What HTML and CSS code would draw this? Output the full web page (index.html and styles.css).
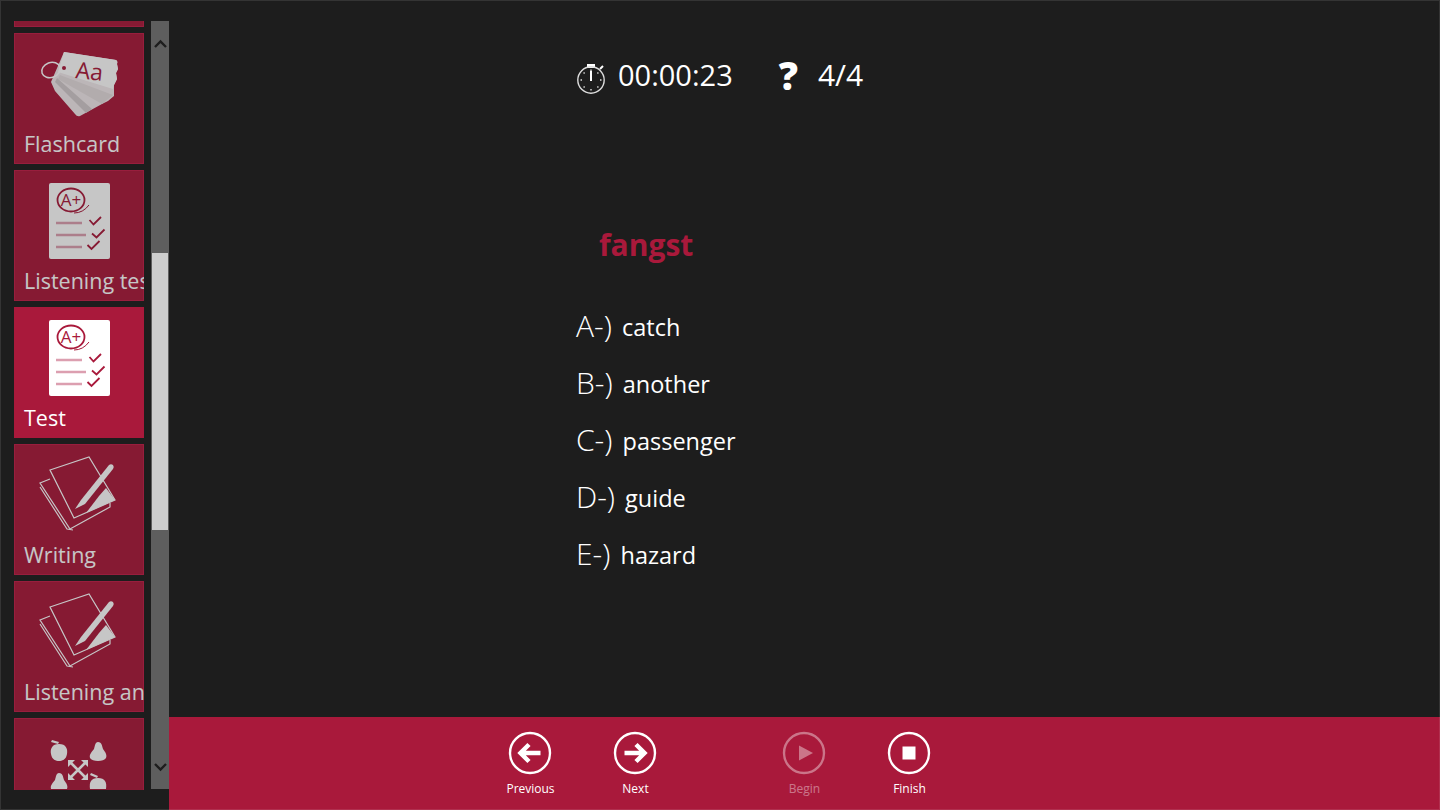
FILE: index.html
```html
<!DOCTYPE html>
<html lang="en">
<head>
<meta charset="UTF-8" />
<title>Test</title>
<link rel="stylesheet" href="styles.css">
</head>
<body>

<svg class="defs" width="0" height="0" aria-hidden="true">
  <defs>
    <symbol id="icon-cards" viewBox="0 0 131 100">
      <path class="shade-light" d="M50 19 L102 27 Q104 28 103 31 L104 36 L102 40 L103 46 L100 52 L100 63 L94 68 L88 71 L66 83 Q63 84 61 81 L41 58 L37 49 Z"/>
      <path class="shade" d="M46 42 L99 62 L88 71 L44 46 Z"/>
      <path class="shade-dark" d="M43 45 L78 76 L72 80 L41 49 Z"/>
      <path class="ink" d="M50 19 L102 27 Q104 28 103 31 L104 36 L102 40 L103 46 L100 52 L99 56 L44 39 Z"/>
      <ellipse class="ring" cx="37" cy="37" rx="9.5" ry="7.5" transform="rotate(-20 37 37)"/>
      <circle class="mark-fill" cx="50" cy="35" r="2"/>
      <text class="card-text" x="61" y="45" transform="rotate(6 61 45)">Aa</text>
    </symbol>
    <symbol id="icon-test" viewBox="0 0 131 100">
      <rect class="ink" x="35" y="13" width="61" height="76" rx="2"/>
      <ellipse class="mark-line" cx="57" cy="30" rx="13.5" ry="11.5"/>
      <path class="mark-thin" d="M60 43 Q69 43 75 35"/>
      <text class="grade-text" x="57" y="36">A+</text>
      <path class="rule" d="M42 53 H68 M42 65 H72 M42 77 H68"/>
      <path class="mark-line" d="M75.5 50 L79.5 54.5 L87 47 M78 63.5 L82.5 67.5 L90.5 59.5 M73.5 75 L77.5 79 L85.5 71"/>
    </symbol>
    <symbol id="icon-writing" viewBox="0 0 131 100">
      <path class="ink-line" d="M36 26 L75 13 L101 56 L60 74 Z"/>
      <path class="ink-line" d="M36 35 L26 39 L56 85 L96 63 L96 59"/>
      <path class="ink-line" d="M26 43 L53 85 L59 86"/>
      <path class="ink" d="M92 44 L101 56 L72 69 L85 52 Z"/>
      <path class="ink" d="M61 65 L67 56 L95 21 Q97 19.5 99 21 Q100.5 23 99 25 L71 60 Z"/>
    </symbol>
    <symbol id="icon-match" viewBox="0 0 131 100">
      <path class="ink" d="M45 26 C52 26 54 31 53 36 C52 42 48 43 45 43 C42 43 38 42 37 36 C36 31 38 26 45 26 Z"/>
      <path class="ink" d="M44 26 L37 24 L38 22 L45 24 Z"/>
      <path class="ink" d="M84 24 C88 24 88 28 89 31 C92 35 93 37 92 40 C90 44 78 44 76 40 C75 36 78 34 80 31 C81 28 81 24 84 24 Z"/>
      <path class="ink" d="M45 55 C49 55 49 59 50 62 C53 66 54 68 53 71 L37 71 C36 67 39 65 41 62 C42 59 42 55 45 55 Z"/>
      <path class="ink" d="M84 60 C91 60 93 64 92 71 L76 71 C75 64 77 60 84 60 Z"/>
      <path class="ink" d="M83 60 L76 57 L77 55 L84 58 Z"/>
      <path class="arrows" d="M57 59 L71 45 M57 45 L71 59"/>
      <path class="ink" d="M74 42 L74 49 L67 42 Z M54 42 L61 42 L54 49 Z M74 62 L67 62 L74 55 Z M54 62 L54 55 L61 62 Z"/>
    </symbol>
  </defs>
</svg>

<div class="app">
  <!-- SIDEBAR -->
  <aside class="sidebar">
    <div class="tile-viewport">
      <ul class="tile-list">
        <li class="tile"></li>
        <li class="tile">
          <svg class="tile-icon"><use href="#icon-cards"/></svg>
          <span class="tile-label">Flashcard</span>
        </li>
        <li class="tile">
          <svg class="tile-icon"><use href="#icon-test"/></svg>
          <span class="tile-label">Listening test</span>
        </li>
        <li class="tile active">
          <svg class="tile-icon"><use href="#icon-test"/></svg>
          <span class="tile-label">Test</span>
        </li>
        <li class="tile">
          <svg class="tile-icon"><use href="#icon-writing"/></svg>
          <span class="tile-label">Writing</span>
        </li>
        <li class="tile">
          <svg class="tile-icon"><use href="#icon-writing"/></svg>
          <span class="tile-label">Listening and writing</span>
        </li>
        <li class="tile">
          <svg class="tile-icon"><use href="#icon-match"/></svg>
          <span class="tile-label">Matching</span>
        </li>
      </ul>
    </div>
    <div class="scrollbar">
      <svg class="scroll-arrow" width="17" height="44" viewBox="0 0 17 44"><path d="M3 26 L8.5 20.5 L14 26"/></svg>
      <div class="scroll-thumb"></div>
      <svg class="scroll-arrow scroll-down" width="17" height="44" viewBox="0 0 17 44"><path d="M3 19 L8.5 24.5 L14 19"/></svg>
    </div>
  </aside>

  <div class="content">
    <!-- QUESTION -->
    <main class="question">
      <div class="stats">
        <svg class="timer-icon" width="30" height="34" viewBox="0 0 30 34">
          <path d="M11 3 H19 V7 H11 Z" class="timer-solid"/>
          <circle cx="15" cy="19" r="13.2"/>
          <path d="M15 10 V20" class="timer-hand"/>
          <path d="M24 8 L27 5" class="timer-hand"/>
          <path d="M15 8.5 V10 M15 28 V29.5 M4.5 19 H6 M24 19 H25.5 M7.6 11.6 L8.6 12.6 M21.4 25.4 L22.4 26.4 M22.4 11.6 L21.4 12.6 M8.6 25.4 L7.6 26.4"/>
        </svg>
        <span class="timer-value">00:00:23</span>
        <span class="question-mark">?</span>
        <span class="count-value">4/4</span>
      </div>
      <h1 class="word">fangst</h1>
      <ol class="options">
        <li class="option"><span class="option-key">A-)</span> catch</li>
        <li class="option"><span class="option-key">B-)</span> another</li>
        <li class="option"><span class="option-key">C-)</span> passenger</li>
        <li class="option"><span class="option-key">D-)</span> guide</li>
        <li class="option"><span class="option-key">E-)</span> hazard</li>
      </ol>
    </main>

    <!-- APP BAR -->
    <footer class="appbar">
      <button class="bar-btn">
        <svg class="bar-icon" viewBox="0 0 44 44"><circle cx="22" cy="22" r="20"/><path class="glyph-line" d="M32.5 22 H13 M21 13.5 L12.5 22 L21 30.5"/></svg>
        Previous
      </button>
      <button class="bar-btn">
        <svg class="bar-icon" viewBox="0 0 44 44"><circle cx="22" cy="22" r="20"/><path class="glyph-line" d="M11.5 22 H31 M23 13.5 L31.5 22 L23 30.5"/></svg>
        Next
      </button>
      <button class="bar-btn disabled">
        <svg class="bar-icon" viewBox="0 0 44 44"><circle cx="22" cy="22" r="20"/><path class="glyph" d="M17 14.5 L31 22 L17 29.5 Z"/></svg>
        Begin
      </button>
      <button class="bar-btn">
        <svg class="bar-icon" viewBox="0 0 44 44"><circle cx="22" cy="22" r="20"/><path class="glyph" d="M15.5 15.5 H28.5 V28.5 H15.5 Z"/></svg>
        Finish
      </button>
    </footer>
  </div>
</div>

</body>
</html>
```

FILE: styles.css
```css
/* Reset */
*, *::before, *::after {
  box-sizing: border-box;
}
body, h1, ul, ol, li, button {
  margin: 0;
  padding: 0;
}
ul, ol {
  list-style: none;
}

:root {
  --crimson: #a9193b;
  --bg: #1d1d1d;
  --ui-font: "Open Sans", "Noto Sans", sans-serif;
}

body {
  width: 1440px;
  height: 810px;
  overflow: hidden;
  background: var(--bg);
  color: white;
  font-family: var(--ui-font);
}

.defs {
  position: absolute;
}

.app {
  position: relative;
  display: flex;
  height: 810px;
}
/* thin window edge */
.app::after {
  content: "";
  position: absolute;
  inset: 0;
  border: 1px solid rgba(255, 255, 255, 0.1);
  pointer-events: none;
}

/* Sidebar */
.sidebar {
  width: 169px;
  flex: none;
  display: flex;
  padding: 21px 0 20px 14px;
  gap: 7px;
}
.tile-viewport {
  width: 130px;
  overflow: hidden;
}
.tile-list {
  margin-top: -125px;
  display: flex;
  flex-direction: column;
  gap: 6px;
}
.tile {
  width: 130px;
  height: 131px;
  flex: none;
  background: var(--crimson);
  opacity: 0.75;
  box-shadow: inset 0 0 0 1px #c21f48;
  overflow: hidden;
  white-space: nowrap;
}
.tile.active {
  opacity: 1;
  box-shadow: none;
}
.tile-icon {
  display: block;
  width: 131px;
  height: 100px;
}
.tile-label {
  display: block;
  padding-left: 10px;
  font-size: 21.5px;
  line-height: 22px;
  color: white;
}

/* Tile icon parts */
.ink { fill: white; }
.shade-light { fill: #f2eaec; }
.shade { fill: #e4dcde; }
.shade-dark { fill: #d2cacc; }
.ring { fill: none; stroke: white; stroke-width: 1.5; }
.ink-line { fill: none; stroke: white; stroke-width: 1.2; }
.mark-fill { fill: var(--crimson); }
.mark-line { fill: none; stroke: var(--crimson); stroke-width: 1.8; }
.mark-thin { fill: none; stroke: var(--crimson); stroke-width: 1; }
.rule { fill: none; stroke: #dc9fb0; stroke-width: 2.5; }
.arrows { fill: none; stroke: white; stroke-width: 2.5; }
.card-text {
  fill: var(--crimson);
  font-family: var(--ui-font);
  font-size: 23px;
}
.grade-text {
  fill: var(--crimson);
  font-family: var(--ui-font);
  font-size: 17px;
  text-anchor: middle;
}

/* Scrollbar */
.scrollbar {
  width: 18px;
  height: 768px;
  background: #5e5e5e;
  display: flex;
  flex-direction: column;
  align-items: center;
}
.scroll-arrow {
  flex: none;
  fill: none;
  stroke: #1d1d1d;
  stroke-width: 2.4;
}
.scroll-thumb {
  width: 16px;
  height: 277px;
  margin-top: 188px;
  background: #cdcdcd;
}
.scroll-down {
  margin-top: auto;
}

/* Question area */
.content {
  flex: 1;
  display: flex;
  flex-direction: column;
}
.question {
  flex: 1;
  padding: 58px 0 0 407px;
}
.stats {
  display: flex;
  align-items: center;
  height: 34px;
  font-size: 29px;
  line-height: 34px;
}
.timer-icon {
  fill: none;
  stroke: #dcdcdc;
  stroke-width: 1.4;
  margin-top: 5px;
}
.timer-solid {
  fill: white;
  stroke: none;
}
.timer-hand {
  stroke: white;
  stroke-width: 2;
}
.timer-value {
  margin-left: 12px;
}
.question-mark {
  margin-left: 46px;
  font-size: 38px;
  font-weight: 800;
}
.count-value {
  margin-left: 20px;
  font-size: 30px;
}
.word {
  margin: 132px 0 0 23px;
  font-size: 30px;
  line-height: 42px;
  font-weight: 700;
  color: var(--crimson);
}
.options {
  margin-top: 31px;
}
.option {
  height: 57px;
  font-size: 23.5px;
  line-height: 57px;
}
.option-key {
  font-size: 30px;
  font-weight: 300;
  margin-right: 4px;
  vertical-align: -1px;
}

/* App bar */
.appbar {
  height: 93px;
  flex: none;
  background: var(--crimson);
  display: flex;
  padding-left: 309px;
}
.bar-btn {
  width: 105px;
  height: 93px;
  border: none;
  background: none;
  color: white;
  font-family: var(--ui-font);
  font-size: 12px;
  line-height: 16px;
  display: flex;
  flex-direction: column;
  align-items: center;
  padding-top: 14px;
  gap: 6px;
}
.bar-btn:nth-child(3) {
  margin-left: 64px;
}
.bar-btn.disabled {
  opacity: 0.4;
}
.bar-icon {
  width: 44px;
  height: 44px;
  margin-right: 1px;
  fill: none;
  stroke: white;
  stroke-width: 2.4;
}
.glyph {
  fill: white;
  stroke: none;
}
.glyph-line {
  stroke-width: 4.5;
}
```
